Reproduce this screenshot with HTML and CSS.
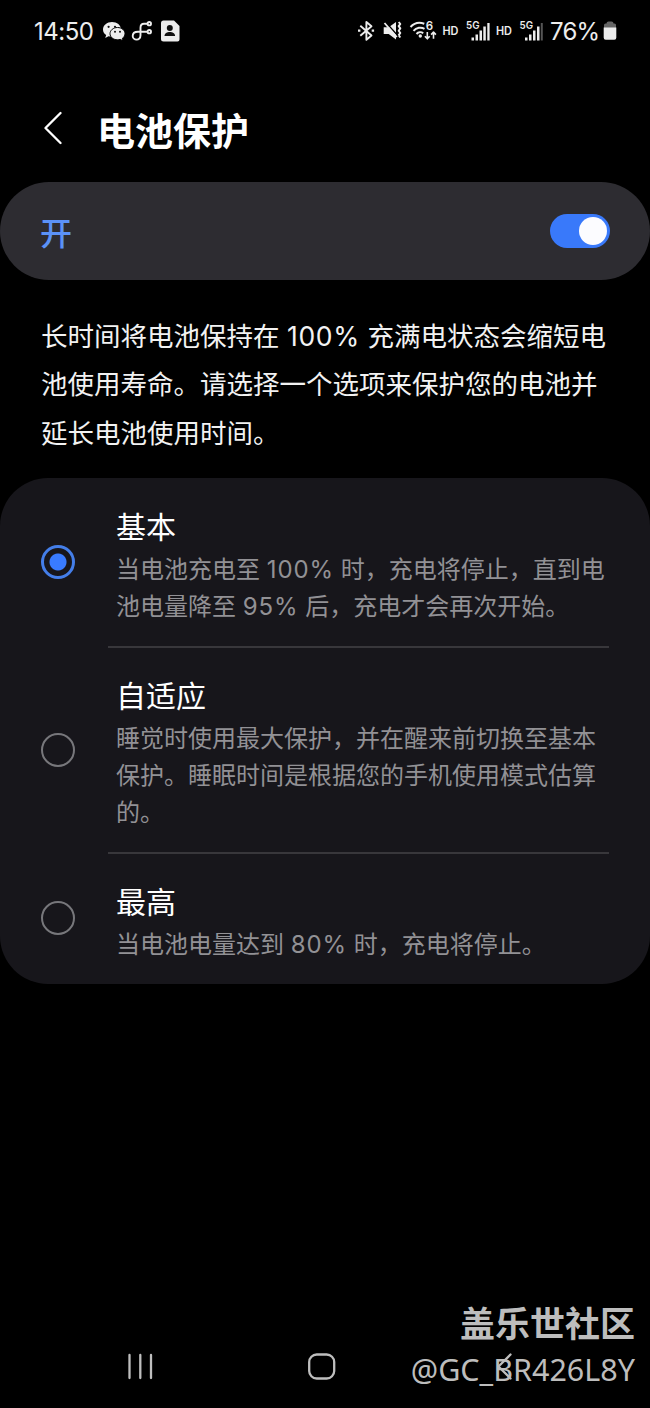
FILE: index.html
```html
<!DOCTYPE html>
<html lang="zh-CN">
<head>
<meta charset="utf-8">
<title>电池保护</title>
<link rel="stylesheet" href="styles.css">
</head>
<body>
<div class="phone">
  <header class="status">
    <span class="clock">14:50</span>
    <svg class="status-left" width="82" height="24" viewBox="102 19 82 24">
      <g fill="#ededed">
        <path d="M112 22c-5 0-9 3.300-9 7.400 0 2.400 1.200 4.400 3.200 5.700l-1 2.900 3.300-1.700c1.100.3 2.100.5 3.500.5 5 0 9-3.200 9-7.400S117 22 112 22z"/>
        <path stroke="#000" stroke-width="1" d="M117.500 27.500c4.200 0 7.500 2.800 7.500 6.200 0 1.900-1 3.500-2.600 4.600l.7 2.500-2.900-1.400c-.9.3-1.700.4-2.700.4-4.200 0-7.500-2.700-7.500-6.100s3.300-6.200 7.500-6.200z"/>
        <path fill-rule="evenodd" d="M163.500 20.500h10.500l5.500 5.500v13.500a2 2 0 0 1-2 2h-14a2.500 2.500 0 0 1-2.500-2.500V23a2.500 2.500 0 0 1 2.500-2.500z"/>
      </g>
      <g fill="#111"><circle cx="108.600" cy="26.800" r="1.100"/><circle cx="115" cy="26.800" r="1.100"/><circle cx="115" cy="31.800" r="1"/><circle cx="120" cy="31.800" r="1"/>
        <circle cx="169.800" cy="28" r="3"/><path d="M164.500 36c0-5.200 10.600-5.200 10.600 0z"/></g>
      <g fill="none" stroke="#ededed" stroke-width="1.900">
        <path d="M147.500 23.700H144c-2.500 0-3.500 1.500-3.500 4v7.500c0 6.200-7.800 5.200-7.800.8 0-3.200 2.800-4.300 5.300-4.300h9.500"/>
        <circle cx="149.300" cy="23.700" r="1.700"/><circle cx="149.300" cy="31.700" r="1.700"/>
      </g>
    </svg>
    <svg class="status-right" width="190" height="28" viewBox="355 17 190 28">
      <g fill="none" stroke="#ededed" stroke-width="1.900" stroke-linejoin="round">
        <path d="M360.300 25.800 371.500 35.500 366.400 39.800V22l5.100 4.200L360.300 35.700"/>
        <path stroke-width="2.200" d="M358 30.700h2.400M371.700 30.700h2.400"/>
        <path stroke-width="2" d="M398.700 22l1.600 2-1.600 2.200 1.600 2.200-1.600 2.300 1.600 2.300-1.600 2.200 1.600 2.300"/>
        <path stroke-width="2" d="M410.500 27c3.500-3.800 9-5 13.800-3.200M413.500 30.800c2.800-3.200 7.600-4 11-2M416.500 34c1.800-2 4.800-2.200 6.700-.8"/>
        <path stroke-width="1.600" d="M427.300 32v6.600M424.900 36.300l2.400 2.500 2.400-2.500M433.500 38.800v-6.600M431.100 34.600l2.400-2.500 2.400 2.500"/>
      </g>
      <g fill="#ededed">
        <circle cx="420.300" cy="36" r="1.700"/>
        <path d="M383.700 27.300h5l7.300-5.300v17.500l-7.300-5.500h-5z"/>
        <path fill="none" stroke="#000" stroke-width="1.500" d="m386 22.500 12 13.500"/>
        <path fill="none" stroke="#ededed" stroke-width="1.800" d="m384.500 23 12.300 14"/>
        <path d="M471.500 37.500h2.500v3h-2.500zM475.500 34.500h2.500v6h-2.500zM479.500 30.500h2.500v10h-2.500zM483.300 26.500h2.500v14h-2.500zM487.300 23h2.300v17.500h-2.300z"/>
        <path d="M525 37.500h2.500v3H525zM529 34.500h2.500v6H529zM533 30.500h2.500v10H533zM537 26.500h2.500v14H537z"/>
        <path fill="#555" d="M540.800 23h2v17.500h-2z"/>
      </g>
      <g class="tiny">
        <text x="425.700" y="30" font-size="11.500">6</text>
        <text x="442.500" y="35" font-size="12" textLength="16" lengthAdjust="spacingAndGlyphs">HD</text>
        <text x="466" y="28.700" font-size="10.500" textLength="13.500" lengthAdjust="spacingAndGlyphs">5G</text>
        <text x="496" y="35" font-size="12" textLength="16" lengthAdjust="spacingAndGlyphs">HD</text>
        <text x="519.500" y="28.700" font-size="10.500" textLength="13.500" lengthAdjust="spacingAndGlyphs">5G</text>
      </g>
    </svg>
    <span class="percent">76%</span>
    <svg class="battery" width="14" height="20" viewBox="0 0 14 20"><path fill="#666" d="M3.500 2.500Q3.500.5 5.500.5h3q2 0 2 2h1q1.500 0 1.500 1.500v4H1V4q0-1.500 1.500-1.500z"/><path fill="#ededed" d="M.7 6.500h12.600v10.200q0 2-2 2H2.700q-2 0-2-2z"/></svg>
  </header>

  <div class="titlebar">
    <svg width="20" height="34" viewBox="0 0 20 34"><path d="M16.500 2 1.500 17l15 15" fill="none" stroke="#fff" stroke-width="2.300" stroke-linecap="round" stroke-linejoin="round"/></svg>
    <h1>电池保护</h1>
  </div>

  <div class="master"><span>开</span><div class="switch"><i></i></div></div>

  <p class="intro">长时间将电池保持在 <span class="num">100%</span> 充满电状态会缩短电<br>池使用寿命。请选择一个选项来保护您的电池并<br>延长电池使用时间。</p>

  <main class="card">
    <section class="option basic">
      <i class="radio on"></i>
      <div class="copy"><h2>基本</h2><p>当电池充电至 <span class="num">100%</span> 时，充电将停止，直到电<br>池电量降至 <span class="num">95%</span> 后，充电才会再次开始。</p></div>
    </section>
    <section class="option adaptive">
      <i class="radio"></i>
      <div class="copy"><h2>自适应</h2><p>睡觉时使用最大保护，并在醒来前切换至基本<br>保护。睡眠时间是根据您的手机使用模式估算<br>的。</p></div>
    </section>
    <section class="option maximum">
      <i class="radio"></i>
      <div class="copy"><h2>最高</h2><p>当电池电量达到 <span class="num">80%</span> 时，充电将停止。</p></div>
    </section>
  </main>

  <nav class="navbar">
    <svg width="400" height="30" viewBox="120 1352 400 30" fill="none" stroke="#bebebe" stroke-width="2.300" stroke-linecap="round" stroke-linejoin="round">
      <path d="M129.500 1355v23M140.300 1355v23M151 1355v23"/>
      <rect x="309.200" y="1354.500" width="25" height="24" rx="7.500"/>
      <path d="m510.500 1354.500-12 12 12 12"/>
    </svg>
  </nav>
  <div class="watermark"><strong>盖乐世社区</strong><span>@GC_BR426L8Y</span></div>
</div>
</body>
</html>
```
FILE: styles.css
```css
* { box-sizing: border-box; }
body { margin: 0; background: #000; }
h1, h2, p { margin: 0; }
i { display: block; }
svg { display: block; flex: none; }
.phone {
  position: relative;
  display: flex;
  flex-direction: column;
  width: 650px;
  height: 1408px;
  overflow: hidden;
  background: #000;
  color: #fff;
  font-family: Inter, "Noto Sans CJK SC", sans-serif;
  white-space: nowrap;
}
.status {
  display: flex;
  align-items: center;
  height: 62px;
  padding: 0 33px 0 34px;
  color: #ededed;
  font-size: 24px;
}
.clock { width: 68px; letter-spacing: -0.5px; }
.status-right { margin-left: 171px; }
.percent { margin-left: 5px; width: 52px; letter-spacing: -0.8px; }
.battery { margin-left: 1px; }
.tiny { fill: #ededed; font-family: Inter, sans-serif; font-weight: 600; }
.titlebar {
  display: flex;
  align-items: center;
  gap: 34px;
  height: 120px;
  padding: 18px 0 0 44px;
}
.titlebar svg { margin-bottom: 6px; }
.titlebar h1 { margin-left: -1px; font-size: 38px; line-height: 56px; font-weight: 700; }
.master {
  display: flex;
  align-items: center;
  justify-content: space-between;
  height: 98px;
  padding: 0 40px;
  border-radius: 49px;
  background: #2d2c31;
  color: #5b92f8;
  font-size: 32px;
  font-weight: 500;
}
.switch {
  display: flex;
  justify-content: flex-end;
  width: 60px;
  height: 34px;
  padding: 3px;
  border-radius: 17px;
  background: #3979fa;
}
.switch i { width: 28px; height: 28px; border-radius: 50%; background: #fcfcff; }
.num { letter-spacing: 0.7px; }
.intro { padding: 32px 0 0 41px; height: 198px; color: #f2f2f2; font-size: 26.5px; line-height: 48.3px; }
.card { height: 506px; border-radius: 48px; background: #17161b; }
.option { display: flex; align-items: center; padding-left: 41px; }
.basic { height: 170px; }
.adaptive { height: 206px; }
.maximum { height: 130px; }
.radio { flex: none; width: 34px; height: 34px; margin-bottom: 3px; border: 2.5px solid #77777b; border-radius: 50%; }
.radio.on { border: 3px solid #447ee9; background: radial-gradient(circle, #397bff 8px, transparent 9px); }
.copy { width: 501px; height: 100%; margin-left: 33px; padding: 26px 0 0 8px; border-bottom: 2px solid #38373b; }
.basic .copy { padding-top: 27px; }
.maximum .copy { border: 0; }
.copy h2 { margin-bottom: 1.5px; font-size: 30px; line-height: 44px; font-weight: 400; }
.copy p { color: #929195; font-size: 24px; line-height: 37.3px; }
.copy .num { letter-spacing: 0.9px; }
.navbar { display: flex; padding-left: 120px; margin-top: 368px; }
.watermark {
  position: absolute;
  right: 15px;
  top: 1299px;
  display: flex;
  flex-direction: column;
  align-items: flex-end;
  color: #bdbdbd;
}
.watermark strong { font-size: 35px; line-height: 50px; font-weight: 700; }
.watermark span { margin-top: -1px; font-family: "Noto Sans", sans-serif; font-size: 30.5px; line-height: 42px; }
```
